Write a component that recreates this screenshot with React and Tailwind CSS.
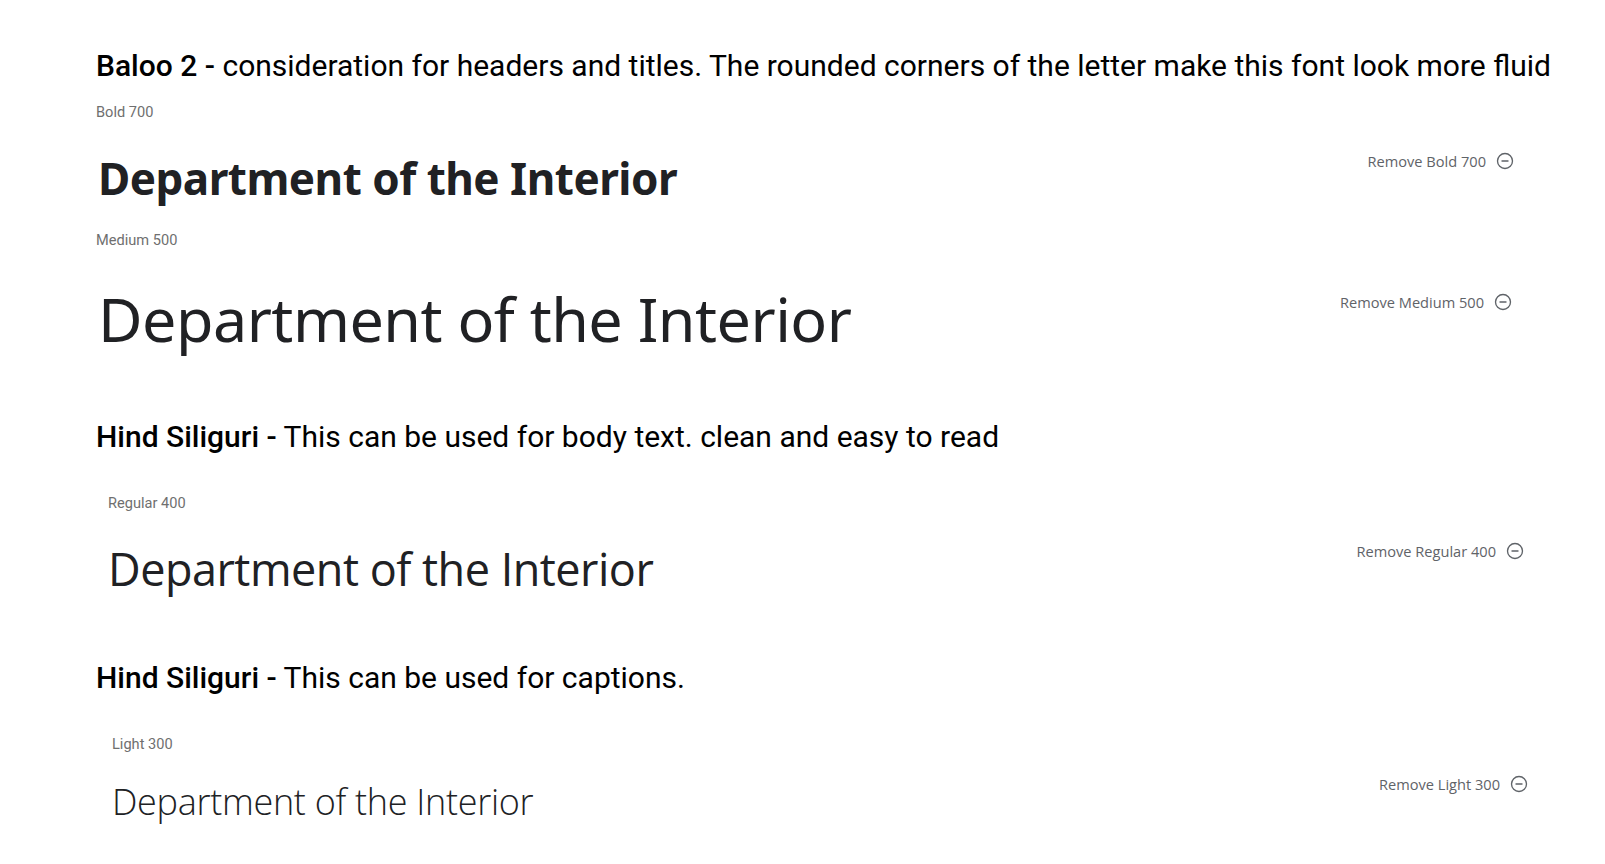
import { MinusCircle } from "lucide-react";

const sans = "font-['Roboto',sans-serif]";

function RemoveButton({ label, className = "" }) {
  return (
    <button
      className={`flex items-center gap-[10px] text-[14.6px] leading-[20px] font-medium text-[#5f6368] font-['Open_Sans',sans-serif] ${className}`}
    >
      {label}
      <MinusCircle size={18} strokeWidth={1.8} />
    </button>
  );
}

function Heading({ bold, rest, className = "" }) {
  return (
    <h2 className={`${sans} text-[30px] leading-[36px] text-black ${className}`}>
      <span className="font-medium">{bold}</span> {rest}
    </h2>
  );
}

function Label({ children, className = "" }) {
  return (
    <div className={`${sans} text-[14.6px] leading-[20px] text-[#6f6f6f] ${className}`}>
      {children}
    </div>
  );
}

export default function App() {
  return (
    <div className="min-h-screen bg-white pl-[96px] pt-[48px]">
      {/* Baloo 2 */}
      <Heading
        bold="Baloo 2 -"
        rest="consideration for headers and titles. The rounded corners of the letter make this font look more fluid"
      />

      <Label className="mt-[18px]">Bold 700</Label>
      <div className="w-[1418px] flex items-start justify-between mt-[28px]">
        <div className="ml-[2px] font-['Noto_Sans',sans-serif] font-bold text-[44px] leading-[56px] text-[#202124] tracking-[-0.5px]">
          Department of the Interior
        </div>
        <RemoveButton label="Remove Bold 700" className="mt-[1px]" />
      </div>

      <Label className="mt-[24px]">Medium 500</Label>
      <div className="w-[1416px] flex items-start justify-between mt-[33px]">
        <div className="ml-[2px] font-['Noto_Sans',sans-serif] font-normal text-[61px] leading-[72px] text-[#202124] tracking-[-0.5px]">
          Department of the Interior
        </div>
        <RemoveButton label="Remove Medium 500" className="mt-[9px]" />
      </div>

      {/* Hind Siliguri body */}
      <Heading
        className="mt-[64px]"
        bold="Hind Siliguri -"
        rest="This can be used for body text. clean and easy to read"
      />

      <div className="ml-[12px] w-[1416px]">
        <Label className="mt-[38px]">Regular 400</Label>
        <div className="flex items-start justify-between mt-[28px]">
          <div className="font-['Open_Sans',sans-serif] font-normal text-[45px] leading-[56px] text-[#202124] tracking-[-0.5px]">
            Department of the Interior
          </div>
          <RemoveButton label="Remove Regular 400" />
        </div>
      </div>

      {/* Hind Siliguri captions */}
      <Heading
        className="mt-[63px]"
        bold="Hind Siliguri -"
        rest="This can be used for captions."
      />

      <div className="ml-[16px] w-[1416px]">
        <Label className="mt-[38px]">Light 300</Label>
        <div className="flex items-start justify-between mt-[26px]">
          <div className="font-['Open_Sans',sans-serif] font-light text-[36px] leading-[44px] text-[#202124] tracking-[-0.3px]">
            Department of the Interior
          </div>
          <RemoveButton label="Remove Light 300" className="mt-[-6px]" />
        </div>
      </div>
    </div>
  );
}
